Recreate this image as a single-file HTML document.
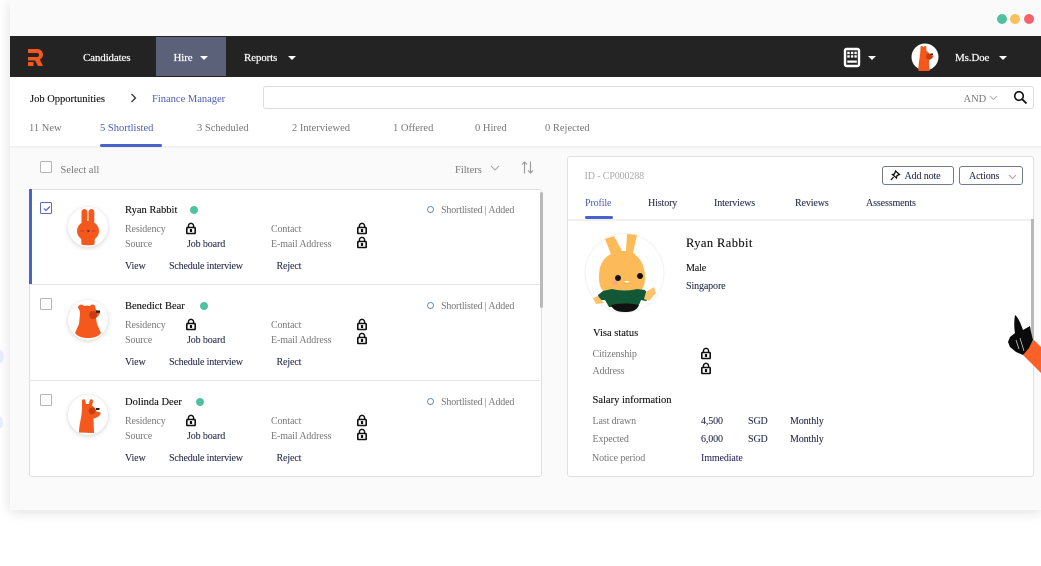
<!DOCTYPE html>
<html><head><meta charset="utf-8"><style>
html,body{margin:0;padding:0;background:#fff;width:1041px;height:566px;overflow:hidden}
body{position:relative;font-family:"Liberation Serif",serif;font-size:10px;color:#555}
.a,.t{position:absolute}
.t{white-space:nowrap;line-height:12px;margin-top:1px;letter-spacing:-.12px}
.g{color:#777}.k{color:#111;-webkit-text-stroke:.12px #111}.n{color:#28304f;-webkit-text-stroke:.1px #28304f}.b{color:#4a5cb8}.w{color:#fff;font-size:11px;letter-spacing:-.15px;-webkit-text-stroke:.2px #fff}
.f{font-size:10.5px;margin-top:2px;letter-spacing:0}
.s{letter-spacing:-.17px}
svg{position:absolute;overflow:visible}
.cb{position:absolute;width:10px;height:10px;border:1.5px solid #b5b5b5;border-radius:1.5px;background:#fff}
.dot{position:absolute;width:8px;height:8px;border-radius:50%;background:#4fc1a0}
.ring{position:absolute;width:5px;height:5px;border:1.3px solid #6a93cf;border-radius:50%}
.line{position:absolute;background:#e6e6e6;height:1px}
</style></head><body>
<svg width="0" height="0" style="position:absolute"><defs>
<g id="lock"><path d="M2.400 4.500V3a2.600 2.600 0 0 1 5.200 0v1.500" fill="none" stroke="#111" stroke-width="1.500"/><rect x=".8" y="4.500" width="8.400" height="6" rx=".8" fill="none" stroke="#111" stroke-width="1.600"/><rect x="3.900" y="6" width="2.200" height="3" fill="#111"/></g>
<g id="caret"><path d="M0 0h8L4 4z" fill="#fff"/></g>
</defs></svg>

<div class="a" style="left:10px;top:0;width:1031px;height:510px;background:#fafafa;box-shadow:0 2px 12px rgba(0,0,0,.13)"></div>
<div class="a" style="left:997px;top:14px;width:10px;height:10px;border-radius:50%;background:#4fc1a0"></div>
<div class="a" style="left:1010px;top:14px;width:10px;height:10px;border-radius:50%;background:#fdc05c"></div>
<div class="a" style="left:1024px;top:14px;width:10px;height:10px;border-radius:50%;background:#f9606a"></div>

<div class="a" style="left:10px;top:36px;width:1031px;height:41px;background:#232323"></div>
<div class="a" style="left:156px;top:37px;width:70px;height:39px;background:#5c617a"></div>
<svg style="left:28px;top:49px" width="15" height="17" viewBox="0 0 15 17"><path d="M0 0H9.500A5.500 5.500 0 0 1 11.800 10.500L15 17H10L7 11.500H0V8H9A2 2 0 0 0 9 4H0Z" fill="#f4581c"/><path d="M0 13h5.500v4H0z" fill="#f4581c"/></svg>
<span class="t w" style="left:83px;top:51px">Candidates</span>
<span class="t w" style="left:173.500px;top:51px">Hire</span>
<svg style="left:200px;top:56px" width="8" height="5"><use href="#caret"/></svg>
<span class="t w" style="left:244px;top:51px">Reports</span>
<svg style="left:288px;top:56px" width="8" height="5"><use href="#caret"/></svg>
<svg style="left:843px;top:47px" width="18" height="21" viewBox="0 0 18 21"><rect x="2" y="2" width="14" height="17" rx="1.500" fill="#232323" stroke="#fff" stroke-width="2.400"/><path d="M4.300 4.800h2.400v2.300H4.300zM7.900 4.800h2.400v2.300H7.900zM11.400 4.800h2.400v2.300h-2.400zM4.300 8.300h2.400v2.300H4.300zM7.900 8.300h2.400v2.300H7.900zM11.400 8.300h2.400v2.300h-2.400zM4.300 13.500h9.500v2.200H4.300z" fill="#fff"/></svg>
<svg style="left:868px;top:56px" width="8" height="5"><use href="#caret"/></svg>
<svg style="left:911px;top:43px" width="28" height="28" viewBox="0 0 28 28"><circle cx="14" cy="14" r="13.500" fill="#fff"/><path d="M9.500 5c-.5-2.500 2.500-2.500 3-.500.5-2 3-2 3 .500 0 1-.5 2 0 3 2 1 3 2.500 3.500 4l3.500 .5c0 2-2 4-4.500 4.500l.5 11H7.500c-.5-8 2-14 2-23.500z" fill="#f4581c"/><circle cx="18" cy="13.500" r="3" fill="#c93d10"/><rect x="19.500" y="10.500" width="2.500" height="1.500" fill="#222"/></svg>
<span class="t w" style="left:955px;top:51px">Ms.Doe</span>
<svg style="left:999px;top:56px" width="8" height="5"><use href="#caret"/></svg>

<div class="a" style="left:10px;top:77px;width:1031px;height:69px;background:#fff;border-bottom:2px solid #f1f1f1"></div>
<span class="t k f" style="left:30px;top:92px">Job Opportunities</span>
<svg style="left:130px;top:93px" width="7" height="10"><path d="M1.500 1l4 4-4 4" fill="none" stroke="#333" stroke-width="1.300"/></svg>
<span class="t b f" style="left:152px;top:92px">Finance Manager</span>
<div class="a" style="left:263px;top:86px;width:769px;height:21px;border:1px solid #dcdcdc;border-radius:3px;background:#fff"></div>
<span class="t g f" style="left:963.500px;top:92px">AND</span>
<svg style="left:989px;top:95px" width="9" height="6"><path d="M1 1l3.500 3.500L8 1" fill="none" stroke="#b5b5b5" stroke-width="1.100"/></svg>
<svg style="left:1013px;top:90px" width="15" height="15"><circle cx="6" cy="6" r="4.300" fill="none" stroke="#111" stroke-width="1.600"/><path d="M9.200 9.200l4.300 4.300" stroke="#111" stroke-width="1.800"/></svg>

<span class="t g f" style="left:29px;top:121px">11 New</span>
<span class="t b f" style="left:100px;top:121px">5 Shortlisted</span>
<div class="a" style="left:100px;top:144px;width:62px;height:3px;border-radius:2px;background:#4a63cc"></div>
<span class="t g f" style="left:197px;top:121px">3 Scheduled</span>
<span class="t g f" style="left:292px;top:121px">2 Interviewed</span>
<span class="t g f" style="left:393px;top:121px">1 Offered</span>
<span class="t g f" style="left:475px;top:121px">0 Hired</span>
<span class="t g f" style="left:545px;top:121px">0 Rejected</span>

<div class="cb" style="left:40px;top:161px"></div>
<span class="t g f" style="left:60.500px;top:163px">Select all</span>
<span class="t g f" style="left:455px;top:163px">Filters</span>
<svg style="left:490px;top:165px" width="10" height="6"><path d="M1 1l4 4 4-4" fill="none" stroke="#aaa" stroke-width="1.100"/></svg>
<svg style="left:521px;top:161px" width="13" height="13" fill="none" stroke="#999" stroke-width="1.100"><path d="M3.500 12.500V1M1 3.500L3.500 1 6 3.500M9.500 .5V12M7 9.500L9.500 12 12 9.500"/></svg>

<!-- list card -->
<div class="a" style="left:29px;top:189px;width:513px;height:288px;background:#fff;border:1px solid #dfdfdf;border-radius:3px;box-sizing:border-box"></div>
<div class="a" style="left:29px;top:189px;width:3px;height:95px;background:#4a63cc"></div>
<div class="line" style="left:30px;top:284px;width:510px"></div>
<div class="line" style="left:30px;top:380px;width:510px"></div>
<div class="a" style="left:540px;top:192px;width:3px;height:116px;background:#b9b9b9;border-radius:2px"></div>

<!-- row1 -->
<div class="cb" style="left:40px;top:202px;border-color:#5d6db8"></div>
<svg style="left:43px;top:205px" width="8" height="7"><path d="M1 3.500l2 2L7 1.500" fill="none" stroke="#5d6db8" stroke-width="1.300"/></svg>
<div class="a" style="left:68px;top:207px;width:40px;height:40px;border-radius:50%;background:#fff;box-shadow:0 1px 5px rgba(0,0,0,.18)"></div>
<svg style="left:68px;top:207px" width="40" height="40" viewBox="0 0 40 40"><g fill="#f4581c"><rect x="13.500" y="2" width="5.800" height="16" rx="2.900"/><rect x="20.500" y="2" width="5.800" height="16" rx="2.900"/><ellipse cx="20" cy="24" rx="11" ry="10"/><path d="M13 28h14l-.5 9.500c-3 1-10 1-13 0z"/></g><path d="M18.500 23.500h3.500l-1.700 1.500z" fill="#222"/><path d="M12.500 24h3.500M24 24h3.500" stroke="#c93d10" stroke-width="1"/></svg>
<span class="t k f" style="left:125px;top:203px">Ryan Rabbit</span>
<div class="dot" style="left:190px;top:206px"></div>
<span class="t g" style="left:125px;top:223px">Residency</span>
<svg style="left:186px;top:223px" width="10" height="11"><use href="#lock"/></svg>
<span class="t g" style="left:271px;top:223px">Contact</span>
<svg style="left:357px;top:223px" width="10" height="11"><use href="#lock"/></svg>
<span class="t g" style="left:125px;top:238px">Source</span>
<span class="t n" style="left:187px;top:238px">Job board</span>
<span class="t g" style="left:271px;top:238px">E-mail Address</span>
<svg style="left:357px;top:237px" width="10" height="11"><use href="#lock"/></svg>
<span class="t n" style="left:125px;top:260px">View</span>
<span class="t n s" style="left:169px;top:260px">Schedule interview</span>
<span class="t n" style="left:276.500px;top:260px">Reject</span>
<div class="ring" style="left:427px;top:206px"></div>
<span class="t g s" style="left:441px;top:204px">Shortlisted | Added</span>

<!-- row2 -->
<div class="cb" style="left:40px;top:298px"></div>
<div class="a" style="left:68px;top:300px;width:40px;height:40px;border-radius:50%;background:#fff;box-shadow:0 1px 5px rgba(0,0,0,.18)"></div>
<svg style="left:68px;top:300px" width="40" height="40" viewBox="0 0 40 40"><path d="M10 8c0-3 3-4 5-3 1 1 1 1 1 1 2-.5 4-.5 6 0 1-2 4-2 5 0l1 4 4 1c0 3-2 6-4 7l1 6 4 9c-3 4-8 5-13 5s-10-1-13-5l4-9 1-10c0-2 0-4-2-6z" fill="#f4581c"/><circle cx="25" cy="15" r="4" fill="#c93d10"/><rect x="28" y="10.500" width="4" height="2.300" fill="#222"/></svg>
<span class="t k f" style="left:125px;top:299px">Benedict Bear</span>
<div class="dot" style="left:200px;top:302px"></div>
<span class="t g" style="left:125px;top:319px">Residency</span>
<svg style="left:186px;top:319px" width="10" height="11"><use href="#lock"/></svg>
<span class="t g" style="left:271px;top:319px">Contact</span>
<svg style="left:357px;top:319px" width="10" height="11"><use href="#lock"/></svg>
<span class="t g" style="left:125px;top:334px">Source</span>
<span class="t n" style="left:187px;top:334px">Job board</span>
<span class="t g" style="left:271px;top:334px">E-mail Address</span>
<svg style="left:357px;top:333px" width="10" height="11"><use href="#lock"/></svg>
<span class="t n" style="left:125px;top:356px">View</span>
<span class="t n s" style="left:169px;top:356px">Schedule interview</span>
<span class="t n" style="left:276.500px;top:356px">Reject</span>
<div class="ring" style="left:427px;top:302px"></div>
<span class="t g s" style="left:441px;top:300px">Shortlisted | Added</span>

<!-- row3 -->
<div class="cb" style="left:40px;top:394px"></div>
<div class="a" style="left:68px;top:395px;width:40px;height:40px;border-radius:50%;background:#fff;box-shadow:0 1px 5px rgba(0,0,0,.18)"></div>
<svg style="left:68px;top:395px" width="40" height="40" viewBox="0 0 40 40"><path d="M14 7c-1-3 3-4 3.500-1l.5 3h3l.5-3c.5-3 4-2 3.500 1l-1 3.500c3 2 4 4 4.500 6l4 1c.5 3-3 5-7 6l.5 14.500-15-.5c0-8 3-16 3-24.500z" fill="#f4581c"/><circle cx="24" cy="16" r="3.500" fill="#c93d10"/><rect x="28" y="13" width="3.500" height="2" fill="#222"/></svg>
<span class="t k f" style="left:125px;top:395px">Dolinda Deer</span>
<div class="dot" style="left:196px;top:398px"></div>
<span class="t g" style="left:125px;top:415px">Residency</span>
<svg style="left:186px;top:415px" width="10" height="11"><use href="#lock"/></svg>
<span class="t g" style="left:271px;top:415px">Contact</span>
<svg style="left:357px;top:415px" width="10" height="11"><use href="#lock"/></svg>
<span class="t g" style="left:125px;top:430px">Source</span>
<span class="t n" style="left:187px;top:430px">Job board</span>
<span class="t g" style="left:271px;top:430px">E-mail Address</span>
<svg style="left:357px;top:429px" width="10" height="11"><use href="#lock"/></svg>
<span class="t n" style="left:125px;top:452px">View</span>
<span class="t n s" style="left:169px;top:452px">Schedule interview</span>
<span class="t n" style="left:276.500px;top:452px">Reject</span>
<div class="ring" style="left:427px;top:398px"></div>
<span class="t g s" style="left:441px;top:396px">Shortlisted | Added</span>

<!-- detail card -->
<div class="a" style="left:567px;top:156px;width:467px;height:321px;background:#fff;border:1px solid #e0e0e0;border-radius:3px;box-sizing:border-box"></div>
<div class="line" style="left:568px;top:219px;width:465px;height:2px;background:#f0f0f0"></div>
<div class="a" style="left:1031px;top:219px;width:3px;height:125px;background:#b9b9b9"></div>
<span class="t" style="left:584.500px;top:170px;color:#aaa">ID - CP000288</span>
<div class="a" style="left:882px;top:166px;width:72px;height:19px;border:1px solid #727a8e;border-radius:3px;box-sizing:border-box"></div>
<svg style="left:890px;top:170px" width="11" height="11" fill="none" stroke="#111" stroke-width="1.300"><path d="M5.500 1l4 3.500-2.500 1-.5 2.500L2.500 4.500l2-.5zM3.500 7L1 10"/></svg>
<span class="t n" style="left:904.500px;top:170px">Add note</span>
<div class="a" style="left:959px;top:166px;width:64px;height:19px;border:1px solid #727a8e;border-radius:3px;box-sizing:border-box"></div>
<span class="t n" style="left:969px;top:170px">Actions</span>
<svg style="left:1008px;top:174px" width="9" height="6"><path d="M1 1l3.500 3.500L8 1" fill="none" stroke="#aaa" stroke-width="1.100"/></svg>
<span class="t b" style="left:585px;top:197px">Profile</span>
<div class="a" style="left:585px;top:216px;width:28px;height:3px;border-radius:2px;background:#4a63cc"></div>
<span class="t n" style="left:648px;top:197px">History</span>
<span class="t n" style="left:714px;top:197px">Interviews</span>
<span class="t n" style="left:795px;top:197px">Reviews</span>
<span class="t n" style="left:866px;top:197px">Assessments</span>

<svg style="left:585px;top:232px" width="80" height="82" viewBox="0 0 80 82"><circle cx="39.500" cy="41" r="39.500" fill="#fff" stroke="#f2f2f2"/>
<path d="M20 7l9-3 8 15h4l1-17 10 1-4 18c7 4 12 13 12 24 0 10-3 14-8 16-9 3-21 3-30 0-5-2-8-6-8-16 0-12 4-19 12-23z" fill="#fcbb58"/>
<path d="M13 63l5-4 9-2c8 2 17 2 25 0l8 1 2 3 5-2 2 3-8 7-5-1c-1 3-2 5-4 7H24l-4-7-6 0z" fill="#125736"/>
<path d="M61 60l8-5 2 6-7 8-5-2z" fill="#fcc36c"/><path d="M8 66l5-2 6 7-8 1z" fill="#fcc36c"/>
<path d="M26 73c8-2 20-2 28 0-2 5-6 7-14 7-8 0-12-2-14-7z" fill="#111"/>
<circle cx="33" cy="46" r="3" fill="#111"/><circle cx="55" cy="44" r="3" fill="#111"/><path d="M39 49h6l-3 2z" fill="#fff"/><circle cx="30" cy="51" r="2.500" fill="#f5a58a"/></svg>

<span class="t k" style="left:686px;top:236px;font-size:12.500px;line-height:14px;letter-spacing:.4px;margin-top:0">Ryan Rabbit</span>
<span class="t k" style="left:686px;top:262px">Male</span>
<span class="t n" style="left:686px;top:280px">Singapore</span>
<span class="t k f" style="left:593px;top:326px">Visa status</span>
<span class="t g" style="left:592.500px;top:348px">Citizenship</span>
<svg style="left:701px;top:348px" width="10" height="11"><use href="#lock"/></svg>
<span class="t g" style="left:592.500px;top:365px">Address</span>
<svg style="left:701px;top:363px" width="10" height="11"><use href="#lock"/></svg>
<span class="t k f" style="left:592.500px;top:393px">Salary information</span>
<span class="t g" style="left:592.500px;top:415px">Last drawn</span>
<span class="t n" style="left:701px;top:415px">4,500</span>
<span class="t n" style="left:748px;top:415px">SGD</span>
<span class="t n" style="left:790px;top:415px">Monthly</span>
<span class="t g" style="left:592.500px;top:433px">Expected</span>
<span class="t n" style="left:701px;top:433px">6,000</span>
<span class="t n" style="left:748px;top:433px">SGD</span>
<span class="t n" style="left:790px;top:433px">Monthly</span>
<span class="t g" style="left:592px;top:452px">Notice period</span>
<span class="t" style="left:701px;top:452px;color:#1a1a55">Immediate</span>

<!-- hand -->
<svg style="left:1000px;top:312px" width="41" height="66" viewBox="0 0 41 66"><path d="M23 43L34 28l7 7v26z" fill="#fb6029"/><path d="M15 3c3 2 6 9 8 15l7-4 1 6 2 8-4 8-6 7-7-3-6-5-2-5 2-5 5-4c-1-5-1-12 0-18z" fill="#0a0a0a"/><path d="M20 26l4 13M16 28l3 9" stroke="#ddd" stroke-width=".7" fill="none"/></svg>

<div class="a" style="left:-4px;top:350px;width:8px;height:13px;border-radius:50%;background:#e6ecfb"></div>
<div class="a" style="left:-5px;top:416px;width:8px;height:13px;border-radius:50%;background:#e6ecfb"></div>
</body></html>
